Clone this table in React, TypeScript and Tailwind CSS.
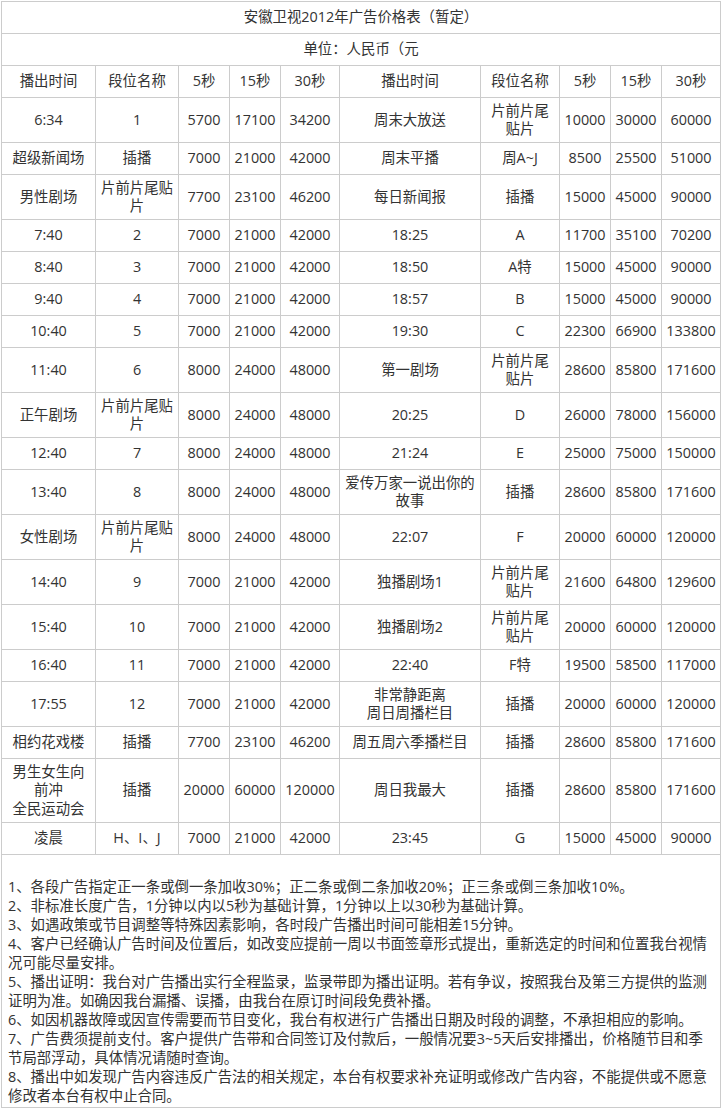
import React from "react";

const H: Record<number, string> = {
  32: "h-[32px]",
  45: "h-[45px]",
  64: "h-[64px]",
};

const rows: [number, string[]][] = [
  [45, ["6:34", "1", "5700", "17100", "34200", "周末大放送", "片前片尾\n贴片", "10000", "30000", "60000"]],
  [32, ["超级新闻场", "插播", "7000", "21000", "42000", "周末平播", "周A~J", "8500", "25500", "51000"]],
  [45, ["男性剧场", "片前片尾贴\n片", "7700", "23100", "46200", "每日新闻报", "插播", "15000", "45000", "90000"]],
  [32, ["7:40", "2", "7000", "21000", "42000", "18:25", "A", "11700", "35100", "70200"]],
  [32, ["8:40", "3", "7000", "21000", "42000", "18:50", "A特", "15000", "45000", "90000"]],
  [32, ["9:40", "4", "7000", "21000", "42000", "18:57", "B", "15000", "45000", "90000"]],
  [32, ["10:40", "5", "7000", "21000", "42000", "19:30", "C", "22300", "66900", "133800"]],
  [45, ["11:40", "6", "8000", "24000", "48000", "第一剧场", "片前片尾\n贴片", "28600", "85800", "171600"]],
  [45, ["正午剧场", "片前片尾贴\n片", "8000", "24000", "48000", "20:25", "D", "26000", "78000", "156000"]],
  [32, ["12:40", "7", "8000", "24000", "48000", "21:24", "E", "25000", "75000", "150000"]],
  [45, ["13:40", "8", "8000", "24000", "48000", "爱传万家一说出你的\n故事", "插播", "28600", "85800", "171600"]],
  [45, ["女性剧场", "片前片尾贴\n片", "8000", "24000", "48000", "22:07", "F", "20000", "60000", "120000"]],
  [45, ["14:40", "9", "7000", "21000", "42000", "独播剧场1", "片前片尾\n贴片", "21600", "64800", "129600"]],
  [45, ["15:40", "10", "7000", "21000", "42000", "独播剧场2", "片前片尾\n贴片", "20000", "60000", "120000"]],
  [32, ["16:40", "11", "7000", "21000", "42000", "22:40", "F特", "19500", "58500", "117000"]],
  [45, ["17:55", "12", "7000", "21000", "42000", "非常静距离\n周日周播栏目", "插播", "20000", "60000", "120000"]],
  [32, ["相约花戏楼", "插播", "7700", "23100", "46200", "周五周六季播栏目", "插播", "28600", "85800", "171600"]],
  [64, ["男生女生向\n前冲\n全民运动会", "插播", "20000", "60000", "120000", "周日我最大", "插播", "28600", "85800", "171600"]],
  [32, ["凌晨", "H、I、J", "7000", "21000", "42000", "23:45", "G", "15000", "45000", "90000"]],
];

const header = ["播出时间", "段位名称", "5秒", "15秒", "30秒", "播出时间", "段位名称", "5秒", "15秒", "30秒"];

const notes = [
  "1、各段广告指定正一条或倒一条加收30%；正二条或倒二条加收20%；正三条或倒三条加收10%。",
  "2、非标准长度广告，1分钟以内以5秒为基础计算，1分钟以上以30秒为基础计算。",
  "3、如遇政策或节目调整等特殊因素影响，各时段广告播出时间可能相差15分钟。",
  "4、客户已经确认广告时间及位置后，如改变应提前一周以书面签章形式提出，重新选定的时间和位置我台视情",
  "况可能尽量安排。",
  "5、播出证明：我台对广告播出实行全程监录，监录带即为播出证明。若有争议，按照我台及第三方提供的监测",
  "证明为准。如确因我台漏播、误播，由我台在原订时间段免费补播。",
  "6、如因机器故障或因宣传需要而节目变化，我台有权进行广告播出日期及时段的调整，不承担相应的影响。",
  "7、广告费须提前支付。客户提供广告带和合同签订及付款后，一般情况要3~5天后安排播出，价格随节目和季",
  "节局部浮动，具体情况请随时查询。",
  "8、播出中如发现广告内容违反广告法的相关规定，本台有权要求补充证明或修改广告内容，不能提供或不愿意",
  "修改者本台有权中止合同。",
];

const cellBase =
  "flex items-center justify-center text-center whitespace-pre-line border-r border-b border-[#cccccc] px-[2px] leading-[18.5px]";

export default function App() {
  return (
    <div
      className="bg-white text-[#333333] text-[14.4px] w-[721px] min-h-[1109px]"
      style={{ fontFamily: '"Open Sans", "Noto Sans CJK SC", sans-serif' }}
    >
      <div className="ml-[1px] pt-[1px]">
        <div className="grid w-[720px] grid-cols-[94px_83px_51px_51px_59px_141px_79px_51px_51px_59px] border-l border-t border-[#cccccc]">
          <div className={`${cellBase} col-span-10 h-[32px]`}>安徽卫视2012年广告价格表（暂定）</div>
          <div className={`${cellBase} col-span-10 h-[32px]`}>单位：人民币（元</div>
          {header.map((h, i) => (
            <div key={`h${i}`} className={`${cellBase} h-[32px]`}>
              {h}
            </div>
          ))}
          {rows.map(([h, cells], r) =>
            cells.map((c, i) => (
              <div key={`r${r}c${i}`} className={`${cellBase} ${H[h]}`}>
                {c}
              </div>
            ))
          )}
          <div className="col-span-10 h-[253px] border-r border-b border-[#cccccc] pl-[6px] pt-[3px] leading-[19px] text-left">
            <div className="h-[19px]" />
            {notes.map((n, i) => (
              <div key={`n${i}`} className="whitespace-nowrap">
                {n}
              </div>
            ))}
          </div>
        </div>
      </div>
    </div>
  );
}
